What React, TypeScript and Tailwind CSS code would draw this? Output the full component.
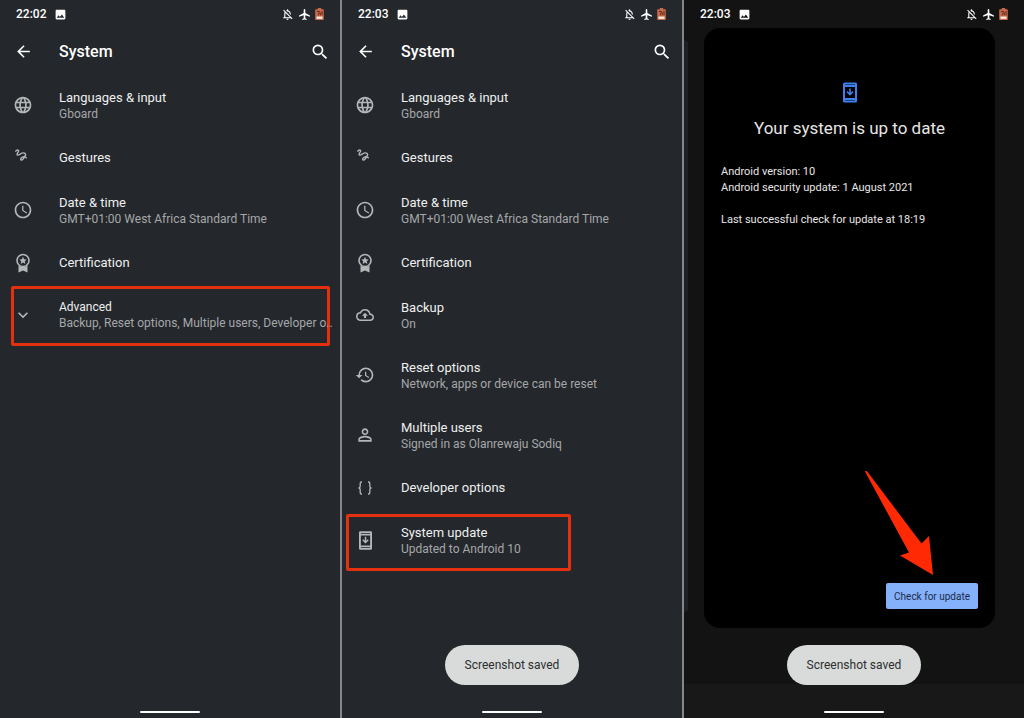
import type { ReactNode } from "react";
import {
  MdAirplanemodeActive,
  MdArrowBack,
  MdExpandMore,
  MdHistory,
  MdImage,
  MdLanguage,
  MdOutlineBackup,
  MdOutlineNotificationsOff,
  MdPersonOutline,
  MdAccessTime,
  MdSearch,
} from "react-icons/md";

function BatteryIcon() {
  return (
    <svg viewBox="0 0 10 14" className="h-3 w-[9px]" aria-hidden="true">
      <path d="M3 0h4v1.5h2.2q.8 0 .8.8v10.9q0 .8-.8.8H.8q-.8 0-.8-.8V2.300q0-.8.8-.8H3z" fill="#c9694b" />
      <path d="M2 4h3L3.600 8.500M6 8.500V6l2-2v4.500" fill="none" stroke="#5b2a20" strokeWidth="1.100" />
      <path d="M1.500 10h7v2.600h-7z" fill="#fff1e8" />
    </svg>
  );
}

function GestureIcon() {
  return (
    <svg viewBox="0 0 12 12" className="mr-[5px] mb-[6px] size-3" fill="none" stroke="currentColor" strokeWidth="1.400" strokeLinecap="round" aria-hidden="true">
      <path d="M.8 2.200C1.800.6 3.700.5 3.600 2 3.500 3.400 1.500 4.500 2.200 5.800c.8 1.300 3-.9 4.800-1.600 2-.8 3.800.2 3.600 1.900-.2 1.800-2.200 1.600-3.600 2.200C5.400 9 5.200 11 6.700 11c1.500 0 1.900-2.300 2.900-2.800.7-.3 1.300.1 1.700.6" />
    </svg>
  );
}

function BadgeIcon() {
  return (
    <svg viewBox="0 0 16 20" className="h-5 w-4" aria-hidden="true">
      <circle cx="8" cy="7.500" r="6" fill="none" stroke="currentColor" strokeWidth="1.600" />
      <path d="m8 3.800 1.100 2.400 2.600.3-1.900 1.800.5 2.600L8 9.600l-2.300 1.300.5-2.600-1.900-1.800 2.600-.3z" fill="currentColor" />
      <path d="M3.500 12.500Q8 15.500 12.500 12.500V19.500L8 17.500 3.500 19.500z" fill="currentColor" />
    </svg>
  );
}

function BracesIcon() {
  return (
    <svg viewBox="0 0 16 16" className="size-4" fill="none" stroke="currentColor" strokeWidth="1.300" aria-hidden="true">
      <path d="M5 2h-.5q-1.300 0-1.300 1.300v3q0 1.700-1.700 1.700 1.700 0 1.700 1.700v3q0 1.300 1.300 1.300H5M11 2h.5q1.300 0 1.300 1.300v3q0 1.700 1.700 1.700-1.700 0-1.700 1.700v3q0 1.300-1.300 1.300H11" />
    </svg>
  );
}

function UpdateIcon({ className }: { className: string }) {
  return (
    <svg viewBox="0 0 14 20" className={className} aria-hidden="true">
      <path fillRule="evenodd" fill="currentColor" d="M1.500 0h11Q14 0 14 1.500v17q0 1.500-1.500 1.500h-11Q0 20 0 18.500v-17Q0 0 1.500 0ZM2 4.500v11h10v-11ZM2 1.900v.7h10v-.7ZM2 17.400v.7h10v-.7Z" />
      <path fill="currentColor" d="M6.200 6h1.600v4.200l1.700-1.600 1 1.100L7 13.200 3.500 9.700l1-1.100 1.700 1.600z" />
    </svg>
  );
}

function StatusBar({ time }: { time: string }) {
  return (
    <div className="flex h-7 items-center justify-between px-4 text-white">
      <div className="flex items-center gap-2">
        <span className="text-[12px] leading-4 font-medium">{time}</span>
        <MdImage className="size-[13px]" />
      </div>
      <div className="flex items-center gap-1">
        <MdOutlineNotificationsOff className="size-[13px]" />
        <MdAirplanemodeActive className="size-[13px]" />
        <BatteryIcon />
      </div>
    </div>
  );
}

function Header() {
  return (
    <header className="flex h-[47px] items-center pr-[10px] pl-[14px] text-white">
      <button type="button" aria-label="Back" className="w-[45px]">
        <MdArrowBack className="size-[19px]" />
      </button>
      <h1 className="flex-1 text-base font-medium">System</h1>
      <button type="button" aria-label="Search">
        <MdSearch className="size-5" />
      </button>
    </header>
  );
}

type RowProps = {
  icon: ReactNode;
  title: string;
  detail?: string;
  small?: boolean;
  highlight?: string;
};

function Row({ icon, title, detail, small, highlight }: RowProps) {
  return (
    <li className="relative">
      {highlight && <span className={`pointer-events-none absolute rounded-xs border-3 border-[#e5300f] ${highlight}`} />}
      <button type="button" className={`relative flex w-full items-center pr-4 text-left ${detail ? "h-[60px]" : "h-[45px]"}`}>
        <span className="flex w-[59px] shrink-0 pl-[13px] text-[#b4b6b8]">
          <span className="flex w-5 justify-center">{icon}</span>
        </span>
        <span className="min-w-0 flex-1">
          <span className={`block truncate text-[#eeeff0] ${small ? "text-[12px] leading-4" : "text-[13px] leading-[17px]"}`}>{title}</span>
          {detail && <span className="block text-[12px] leading-4 whitespace-nowrap text-[#a5a7aa]">{detail}</span>}
        </span>
      </button>
    </li>
  );
}

function CommonRows() {
  return (
    <>
      <Row icon={<MdLanguage className="size-5" />} title="Languages & input" detail="Gboard" />
      <Row icon={<GestureIcon />} title="Gestures" />
      <Row icon={<MdAccessTime className="size-5" />} title="Date & time" detail="GMT+01:00 West Africa Standard Time" />
      <Row icon={<BadgeIcon />} title="Certification" />
    </>
  );
}

function HomeBar() {
  return <div className="mx-auto mb-[5px] h-0.5 w-[60px] rounded-full bg-white" />;
}

function Toast() {
  return (
    <div role="status" className="mx-auto mb-[26px] flex h-10 items-center rounded-[20px] bg-[#d9dbda] px-5 text-[12px] text-[#2c2e2f]">
      Screenshot saved
    </div>
  );
}

function Screen({ time, toast, children }: { time: string; toast?: boolean; children: ReactNode }) {
  return (
    <section className="flex min-w-0 flex-col bg-[#24272b]">
      <StatusBar time={time} />
      <Header />
      <ul className="flex-1">{children}</ul>
      {toast && <Toast />}
      <HomeBar />
    </section>
  );
}

function UpdateScreen() {
  return (
    <section className="relative flex min-w-0 flex-col bg-[linear-gradient(to_top,#181818_34px,#131314_34px)]">
      <span className="absolute top-10 bottom-[106px] left-0 w-1 rounded-r-lg bg-[#1e2124]" />
      <StatusBar time="22:03" />
      <div className="mr-[29px] ml-5 flex flex-1 flex-col rounded-2xl bg-black px-[17px] pt-[54px] pb-[19px] text-[#e6e6e6]">
        <UpdateIcon className="mx-auto h-[21px] w-[14px] text-[#3f80ee]" />
        <h2 className="mt-[13px] text-center text-[17px] leading-6">Your system is up to date</h2>
        <p className="mt-6 text-[11px] leading-4">
          Android version: 10
          <br />
          Android security update: 1 August 2021
        </p>
        <p className="mt-4 text-[11px] leading-4">Last successful check for update at 18:19</p>
        <div className="relative mt-auto self-end">
          <svg viewBox="0 0 70 106" className="absolute right-[44px] bottom-[33px] h-[106px] w-[70px]" aria-hidden="true">
            <path d="M1 1.500Q2-.5 4 2.500L57.500 73.500 65 66l4 39L36 85.500l9-3z" fill="#ff2a04" />
          </svg>
          <button type="button" className="h-[26px] rounded-xs bg-[#85b1fa] px-2 text-[10px] text-[#1b2c4a]">
            Check for update
          </button>
        </div>
      </div>
      <div className="mt-[17px] flex">
        <Toast />
      </div>
      <HomeBar />
    </section>
  );
}

export default function App() {
  return (
    <main className="grid min-h-screen grid-cols-3 gap-0.5 bg-[#85878a] font-[Roboto,sans-serif]">
      <Screen time="22:02">
        <CommonRows />
        <Row
          icon={<MdExpandMore className="size-5" />}
          title="Advanced"
          detail="Backup, Reset options, Multiple users, Developer o.."
          small
          highlight="top-px -bottom-px left-[11px] right-[10px]"
        />
      </Screen>
      <Screen time="22:03" toast>
        <CommonRows />
        <Row icon={<MdOutlineBackup className="size-[18px]" />} title="Backup" detail="On" />
        <Row icon={<MdHistory className="size-5" />} title="Reset options" detail="Network, apps or device can be reset" />
        <Row icon={<MdPersonOutline className="size-5" />} title="Multiple users" detail="Signed in as Olanrewaju Sodiq" />
        <Row icon={<BracesIcon />} title="Developer options" />
        <Row
          icon={<UpdateIcon className="h-[19px] w-[13px]" />}
          title="System update"
          detail="Updated to Android 10"
          highlight="top-1 -bottom-px left-1 w-[225px]"
        />
      </Screen>
      <UpdateScreen />
    </main>
  );
}
